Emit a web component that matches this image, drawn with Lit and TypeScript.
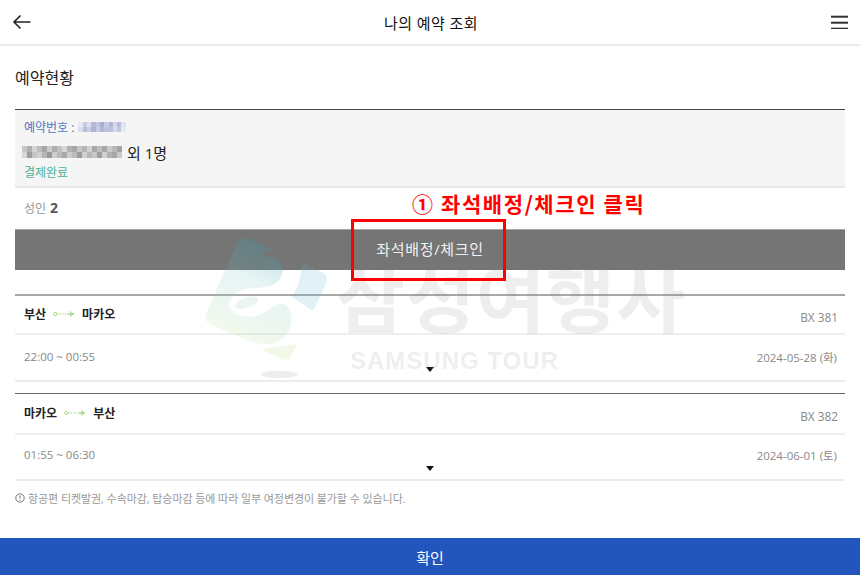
import { LitElement, html, css, svg } from 'lit';
import { customElement } from 'lit/decorators.js';

const SANS = css`'Open Sans', 'Noto Sans CJK KR', sans-serif`;

const legs = [
  { from: '부산', to: '마카오', flight: 'BX 381', time: '22:00 ~ 00:55', date: '2024-05-28 (화)' },
  { from: '마카오', to: '부산', flight: 'BX 382', time: '01:55 ~ 06:30', date: '2024-06-01 (토)' },
];

// pixelated, censored text: two rows of mosaic blocks
const idShades = [
  '#e6e8f3', '#c6cae2', '#dcdfee', '#b4bad9', '#c2c7e0', '#a8aed3', '#c6cae2', '#b2b8d8', '#d4d8ea', '#b8bddb', '#e0e3f0',
  '#dcdff0', '#b8bddb', '#ccd0e6', '#aeb4d6', '#c8cce3', '#b0b6d7', '#bec3de', '#bbc0dc', '#d8dbec', '#c2c7e0', '#e6e8f3',
];
const nameShades = [
  '#c8c8c8', '#b0b0b0', '#d4d4d4', '#bcbcbc', '#a6a6a6', '#cbcbcb', '#adadad', '#c0c0c0', '#d8d8d8', '#b2b2b2', '#a6a6a6', '#c6c6c6', '#b6b6b6', '#d2d2d2', '#aaaaaa', '#bebebe', '#a8a8a8', '#cacaca', '#b8b8b8', '#a4a4a4',
  '#d6d6d6', '#9e9e9e', '#c4c4c4', '#d0d0d0', '#b4b4b4', '#999999', '#cecece', '#bababa', '#a8a8a8', '#cccccc', '#bcbcbc', '#9c9c9c', '#d0d0d0', '#b8b8b8', '#c8c8c8', '#a0a0a0', '#d0d0d0', '#b0b0b0', '#a6a6a6', '#c8c8c8',
];

const routeArrow = svg`<svg width="22" height="6" viewBox="0 0 22 6">
  <circle cx="2.2" cy="3" r="1.6" fill="none" stroke="#a6dc8c" stroke-width="1"/>
  <path d="M4 3H20" stroke="#a6dc8c" stroke-width="1" stroke-dasharray="1.5 1"/>
  <path d="M17 .5 20 3l-3 2.5M15 3h6" fill="none" stroke="#8fd070" stroke-width="1"/>
</svg>`;

@customElement('app-root')
export class AppRoot extends LitElement {
  static styles = css`
    :host {
      display: block;
      position: relative;
      width: 860px;
      height: 575px;
      overflow: hidden;
      background: #fff;
      font-family: ${SANS};
      color: #222;
    }

    .page {
      display: flex;
      flex-direction: column;
      height: 575px;
    }

    .top {
      display: flex;
      align-items: center;
      justify-content: space-between;
      height: 44px;
      padding: 0 12px;
      border-bottom: 2px solid #ececec;
      flex: none;
    }

    .top h1 {
      margin: 0;
      font-size: 15px;
      font-weight: 400;
      letter-spacing: 0.4px;
      color: #111;
    }

    .content {
      flex: 1;
      padding: 0 15px;
    }

    .heading {
      height: 63px;
      box-sizing: border-box;
      padding-bottom: 2px;
      display: flex;
      align-items: center;
      font-size: 16px;
      color: #222;
    }

    .summary {
      border-top: 1px solid #444;
      border-bottom: 2px solid #e9e9e9;
      background: #f5f5f5;
      height: 79px;
      padding: 11px 9px 0;
      box-sizing: border-box;
    }

    .no {
      display: flex;
      align-items: center;
      height: 12px;
      font-size: 12px;
      color: #4f74c4;
      gap: 4px;
    }

    .name {
      display: flex;
      align-items: center;
      margin: 10px 0 0 -2px;
      height: 18px;
      font-size: 15px;
      color: #222;
      gap: 5px;
    }

    .paid {
      margin-top: 5px;
      font-size: 12px;
      line-height: 14px;
      color: #4db39a;
    }

    .blur {
      display: grid;
      filter: blur(0.6px);
    }

    .blur i {
      display: block;
      height: 5px;
    }

    .blur.id {
      grid-template-columns: repeat(11, 4.3px);
    }

    .blur.who {
      grid-template-columns: repeat(20, 5px);
    }

    .blur.who i {
      height: 6px;
    }

    .pax {
      height: 41px;
      box-sizing: border-box;
      padding: 0 9px 2px;
      display: flex;
      align-items: center;
      gap: 4px;
      font-size: 12px;
      color: #999;
    }

    .pax b {
      font-size: 14px;
      color: #555;
    }

    .checkin {
      display: block;
      width: 100%;
      height: 41px;
      border: 0;
      border-top: 1px solid #a5a5a5;
      padding: 0 0 3px;
      background: #757575;
      color: #f2f2f2;
      font: 15px ${SANS};
      letter-spacing: 0.7px;
    }

    .leg {
      border-top: 1px solid #666;
      margin-bottom: 11px;
    }

    .leg.first {
      margin-top: 24px;
      border-top: 2px solid #a8a8a8;
    }

    .route,
    .sched {
      display: flex;
      justify-content: space-between;
      padding: 0 8px 0 9px;
      box-sizing: border-box;
      font-size: 11.5px;
      color: #888;
    }

    .route {
      height: 41px;
      align-items: center;
      border-bottom: 2px solid #efefef;
    }

    .first .route {
      height: 39px;
    }

    .flight {
      padding-top: 4px;
      margin-right: -1px;
      font-size: 11.8px;
    }

    .places {
      display: flex;
      align-items: center;
      gap: 7px;
      padding-bottom: 2px;
      font-weight: 700;
      color: #222;
      font-size: 12px;
    }

    .sched {
      position: relative;
      height: 46px;
      padding-top: 12px;
      border-bottom: 2px solid #ececec;
    }

    .first .sched {
      height: 47px;
      padding-top: 14px;
    }

    .caret {
      position: absolute;
      left: 411px;
      bottom: 8px;
      width: 0;
      height: 0;
      border: 4px solid transparent;
      border-top: 5px solid #111;
      border-bottom: 0;
    }

    .note {
      display: flex;
      align-items: center;
      gap: 3px;
      margin-top: -4px;
      height: 20px;
      font-size: 11px;
      letter-spacing: -0.08px;
      color: #999;
    }

    .confirm {
      flex: none;
      display: block;
      width: 100%;
      height: 37px;
      border: 0;
      padding: 1px 0 0;
      background: #2356bd;
      color: #fff;
      font: 15px ${SANS};
    }

    .watermark {
      position: absolute;
      left: 200px;
      top: 232px;
      width: 490px;
      height: 150px;
      pointer-events: none;
    }

    .watermark svg {
      position: absolute;
      left: 0;
      top: 0;
    }

    .wm-ko {
      position: absolute;
      left: 136px;
      top: 35px;
      font-family: 'Noto Sans CJK KR', sans-serif;
      font-size: 75px;
      line-height: 56px;
      font-weight: 700;
      letter-spacing: 1px;
      white-space: nowrap;
      color: rgba(120, 125, 130, 0.13);
    }

    .wm-en {
      position: absolute;
      left: 150px;
      top: 115px;
      font: 700 24px/28px 'Liberation Sans', sans-serif;
      letter-spacing: 1px;
      white-space: nowrap;
      color: rgba(120, 125, 130, 0.13);
    }

    .callout {
      position: absolute;
      left: 351px;
      top: 219px;
      width: 155px;
      height: 62px;
      box-sizing: border-box;
      border: 3px solid #f00;
    }

    .callout-label {
      position: absolute;
      left: 412px;
      top: 188px;
      font-family: 'Noto Sans CJK KR', sans-serif;
      font-size: 21px;
      line-height: 30px;
      font-weight: 700;
      letter-spacing: 1.6px;
      color: #f00;
      white-space: nowrap;
    }
  `;

  private mosaic(kind: string, shades: string[]) {
    return html`<span class="blur ${kind}">${shades.map((c) => html`<i style="background:${c}"></i>`)}</span>`;
  }

  private renderLeg(leg: (typeof legs)[number], first: boolean) {
    return html`
      <div class="leg ${first ? 'first' : ''}">
        <div class="route">
          <span class="places">${leg.from} ${routeArrow} ${leg.to}</span>
          <span class="flight">${leg.flight}</span>
        </div>
        <div class="sched">
          <span>${leg.time}</span>
          <span>${leg.date}</span>
          <span class="caret"></span>
        </div>
      </div>
    `;
  }

  render() {
    return html`
      <div class="page">
        <header class="top">
          <svg width="20" height="16" viewBox="0 0 20 16" fill="none" stroke="#222" stroke-width="1.6">
            <path d="M2 8H18.5M8.5 1.5 2 8 8.5 14.5" />
          </svg>
          <h1>나의 예약 조회</h1>
          <svg width="18" height="14" viewBox="0 0 18 14" fill="#333">
            <rect x="1" y="0.7" width="17" height="2" />
            <rect x="1" y="6.7" width="17" height="2" />
            <rect x="1" y="12.7" width="17" height="2" />
          </svg>
        </header>
        <main class="content">
          <div class="heading">예약현황</div>
          <section class="summary">
            <div class="no">예약번호 : ${this.mosaic('id', idShades)}</div>
            <div class="name">${this.mosaic('who', nameShades)} 외 1명</div>
            <div class="paid">결제완료</div>
          </section>
          <div class="pax">성인 <b>2</b></div>
          <button class="checkin">좌석배정/체크인</button>
          ${legs.map((l, i) => this.renderLeg(l, i === 0))}
          <div class="note">
            <svg width="10" height="10" viewBox="0 0 10 10" fill="none" stroke="#777">
              <circle cx="5" cy="5" r="4.2" />
              <path d="M5 2.4V5.6M5 6.8V7.8" />
            </svg>
            항공편 티켓발권, 수속마감, 탑승마감 등에 따라 일부 여정변경이 불가할 수 있습니다.
          </div>
        </main>
        <button class="confirm">확인</button>
      </div>

      <div class="watermark">
        <svg width="140" height="150" viewBox="0 0 420 450">
          <defs>
            <linearGradient id="lg" gradientUnits="userSpaceOnUse" x1="230" y1="20" x2="90" y2="320">
              <stop offset="0" stop-color="#288ca0" stop-opacity="0.32" />
              <stop offset="0.45" stop-color="#6cc0c0" stop-opacity="0.16" />
              <stop offset="1" stop-color="#c8e49c" stop-opacity="0.2" />
            </linearGradient>
          </defs>
          <path
            fill="url(#lg)"
            fill-rule="evenodd"
            d="M215 50C195 56 183 64 185 72C215 72 240 80 248 100C252 125 240 150 215 160C190 170 150 166 125 175C100 185 85 205 87 222C90 242 120 255 150 255C180 253 205 232 235 215C255 212 272 228 275 260C274 295 255 322 225 332C195 340 160 335 130 320L28 275C18 270 13 260 18 245L108 40C115 22 128 14 145 20Z
               M105 225C105 205 135 192 165 193C178 195 177 208 165 216C145 230 115 238 105 225Z"
          />
          <path
            fill="#5fb4c8"
            fill-opacity="0.18"
            d="M305 92L368 122C380 128 384 140 379 152L340 237L275 195C295 165 305 130 305 92Z"
          />
          <path
            fill="#c8e49c"
            fill-opacity="0.22"
            d="M182 352L292 335L272 375C266 385 255 386 245 381Z"
          />
          <ellipse cx="238" cy="427" rx="55" ry="11" fill="#000" fill-opacity="0.07" />
        </svg>
        <div class="wm-ko">삼성여행사</div>
        <div class="wm-en">SAMSUNG TOUR</div>
      </div>

      <div class="callout-label">① 좌석배정/체크인 클릭</div>
      <div class="callout"></div>
    `;
  }
}
